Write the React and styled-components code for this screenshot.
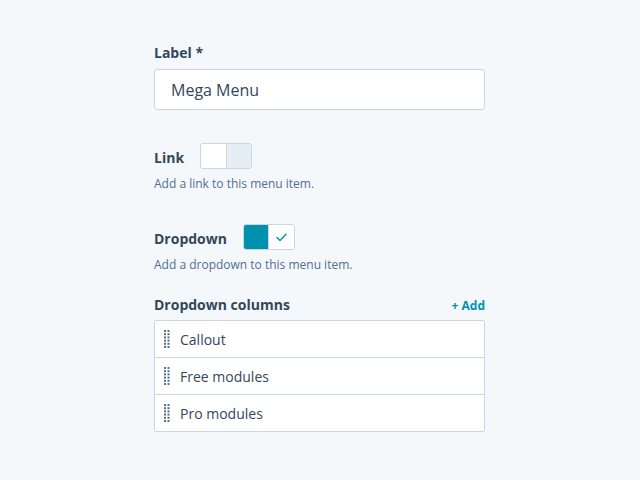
import React from "react";
import styled, { createGlobalStyle } from "styled-components";

const columns = ["Callout", "Free modules", "Pro modules"];

const Grip = () => (
  <svg width="6" height="18" viewBox="0 0 6 18">
    {[0, 1, 2, 3, 4, 5].map((r) =>
      [0, 1].map((c) => (
        <rect key={`${r}-${c}`} x={c * 3.5} y={r * 3.2} width="2" height="2" fill="#516f90" />
      ))
    )}
  </svg>
);

const Check = () => (
  <svg width="11" height="9" viewBox="0 0 11 9">
    <path d="M1 4.6 L4 7.4 L10 1.2" fill="none" stroke="#0091ae" strokeWidth="1.4" strokeLinecap="round" strokeLinejoin="round" />
  </svg>
);

const App = () => {
  return (
    <Page>
      <GlobalStyle />
      <Form>
        <Field>
          <Label>Label *</Label>
          <Input defaultValue="Mega Menu" />
        </Field>

        <ToggleField $top={33}>
          <ToggleRow>
            <Label>Link</Label>
            <Toggle>
              <Half $fill="#ffffff" />
              <Half $fill="#e5edf5" />
            </Toggle>
          </ToggleRow>
          <Help>Add a link to this menu item.</Help>
        </ToggleField>

        <ToggleField $top={32}>
          <ToggleRow>
            <Label>Dropdown</Label>
            <Toggle>
              <Half $fill="#0091ae" />
              <Half $fill="#ffffff">
                <Check />
              </Half>
            </Toggle>
          </ToggleRow>
          <Help>Add a dropdown to this menu item.</Help>
        </ToggleField>

        <ListHeader>
          <Label>Dropdown columns</Label>
          <AddLink>+ Add</AddLink>
        </ListHeader>
        <List>
          {columns.map((name) => (
            <Row key={name}>
              <Grip />
              <RowText>{name}</RowText>
            </Row>
          ))}
        </List>
      </Form>
    </Page>
  );
};

const GlobalStyle = createGlobalStyle`
  html, body {
    margin: 0;
    background: #f5f8fa;
    font-family: "Open Sans", "Noto Sans", sans-serif;
  }
`;

const Page = styled.div`
  min-height: 480px;
  background: #f5f8fa;
  padding: 43px 0 0 154px;
  box-sizing: border-box;
`;

const Form = styled.div`
  width: 331px;
  display: flex;
  flex-direction: column;
`;

const Field = styled.div`
  display: flex;
  flex-direction: column;
  gap: 6px;
`;

const Label = styled.div`
  font-size: 14px;
  line-height: 20px;
  font-weight: 700;
  color: #33475b;
`;

const Input = styled.input`
  box-sizing: border-box;
  height: 41px;
  width: 100%;
  border: 1px solid #cbd6e2;
  border-radius: 3px;
  background: #fff;
  padding: 0 16px;
  font-family: inherit;
  font-size: 16px;
  color: #33475b;
  outline: none;
`;

const ToggleField = styled.div`
  margin-top: ${(p) => p.$top}px;
  display: flex;
  flex-direction: column;
  gap: 7px;
`;

const ToggleRow = styled.div`
  display: flex;
  align-items: center;
  gap: 16px;

  & > div:first-child {
    padding-top: 3px;
  }
`;

const Toggle = styled.div`
  box-sizing: border-box;
  width: 52px;
  height: 26px;
  display: flex;
  border: 1px solid #cbd6e2;
  border-radius: 3px;
  overflow: hidden;
`;

const Half = styled.div`
  flex: 1;
  background: ${(p) => p.$fill};
  display: flex;
  align-items: center;
  justify-content: center;
  & + & {
    border-left: 1px solid #cbd6e2;
  }
`;

const Help = styled.div`
  font-size: 12px;
  line-height: 16px;
  color: #516f90;
`;

const ListHeader = styled.div`
  margin-top: 22px;
  display: flex;
  align-items: center;
  justify-content: space-between;
`;

const AddLink = styled.a`
  font-size: 12px;
  font-weight: 700;
  color: #0091ae;
  cursor: pointer;
`;

const List = styled.div`
  margin-top: 5px;
  border: 1px solid #cbd6e2;
  border-radius: 2px;
  background: #fff;
`;

const Row = styled.div`
  height: 36px;
  display: flex;
  align-items: center;
  gap: 10px;
  padding-left: 9px;
  & + & {
    border-top: 1px solid #cbd6e2;
  }
`;

const RowText = styled.span`
  font-size: 14px;
  color: #33475b;
`;

export default App;
